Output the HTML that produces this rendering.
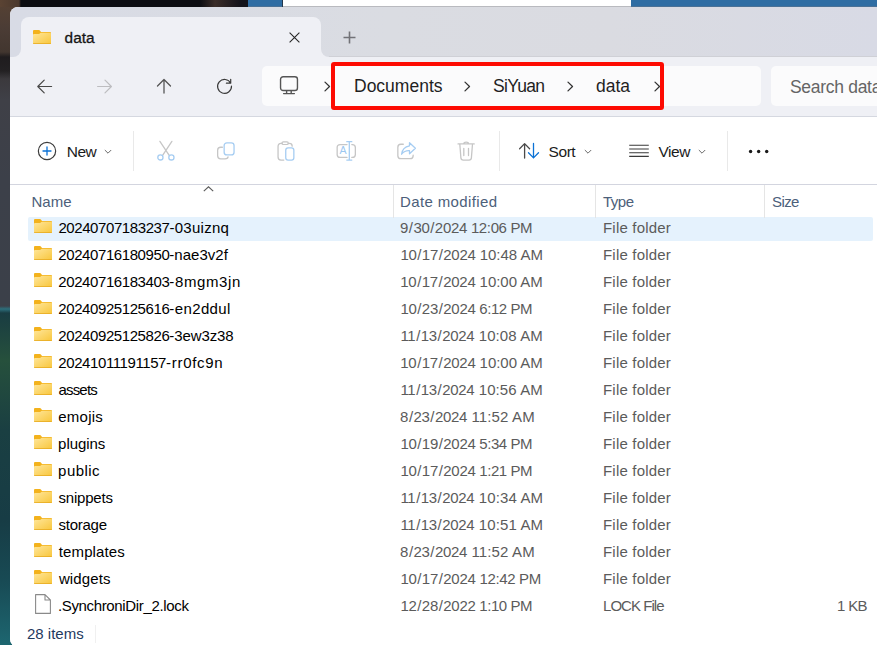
<!DOCTYPE html>
<html lang="en">
<head>
<meta charset="utf-8">
<title>data - File Explorer</title>
<style>
*{box-sizing:border-box;margin:0;padding:0}
html,body{width:877px;height:645px;overflow:hidden}
body{position:relative;font-family:"Liberation Sans",sans-serif;font-size:15px;color:#1a1a1a;
 background:linear-gradient(180deg,#574233 0px,#4b3c35 28px,#42362f 52px,#1f1c1e 57px,#232123 71px,#3b393d 79px,#3f4047 100px,#3c4049 180px,#3b4049 306px,#2d6f7c 309px,#193c42 313px,#26503c 360px,#1a3f42 430px,#173c45 520px,#184a54 580px,#1d6670 645px);}
.abs{position:absolute}
/* desktop top strip */
#top-dark{left:0;top:0;width:248px;height:7px;background:linear-gradient(90deg,#5a4333 0,#4a382d 19px,#0c0d12 21px,#0c0d12 200px,#3a2c28 215px,#14131a 240px)}
#top-blue1{left:248px;top:0;width:35px;height:7px;background:linear-gradient(180deg,#2f6da3 0,#2f6da3 6px,#4a7196 6px)}
#top-white{left:283px;top:0;width:348px;height:6px;background:#fff}
#top-blue2{left:631px;top:0;width:246px;height:7px;background:linear-gradient(180deg,#2f6da3 0,#2f6da3 6px,#4a7196 6px)}
/* window */
#win{left:10px;top:7px;width:900px;height:640px;background:#fff;border-radius:8px 0 0 8px;overflow:hidden}
#titlebar{left:0;top:0;width:900px;height:50px;background:linear-gradient(90deg,#d8dbe5 0,#dadce2 380px,#dadbe1 600px,#d8dae5 867px)}
#tab{left:11px;top:10px;width:300px;height:40px;background:#eff0f5;border-radius:8px 8px 0 0}
.tabfoot{width:8px;height:8px;top:42px;background:#eff0f5}
.tabfoot i{display:block;width:8px;height:8px;background:#d8dbe5}
#navbar{left:0;top:50px;width:900px;height:60px;background:#eff0f5;border-bottom:1px solid #d5d8e0}
#addr{left:252px;top:9px;width:499px;height:40px;background:#fbfbfc;border-radius:5px}
#search{left:761px;top:9px;width:200px;height:40px;background:#fbfbfc;border-radius:5px}
.crumb{top:0;height:42px;line-height:41px;font-size:17.5px;color:#1f1f1f;white-space:nowrap}
#redbox{left:331px;top:62px;width:333px;height:48px;border:4px solid #fd0b02;border-radius:3px}
#toolbar{left:0;top:110px;width:900px;height:68px;background:#fff;border-bottom:1px solid #d3d5df}
.tlabel{top:0;height:69px;line-height:69px;font-size:15.5px;letter-spacing:-0.45px;color:#1b1b1b;white-space:nowrap}
.tsep{top:14px;width:1px;height:40px;background:#e9e9e9}
#list{left:0;top:178px;width:900px;height:460px;background:#fff}
.hdr{top:5px;height:24px;line-height:24px;color:#4c607a;font-size:15px;white-space:nowrap}
.csep{top:0;width:1px;height:33px;background:#e5e5e5}
.row{left:0;width:900px;height:27px}
.row>span{position:absolute;top:0;height:24px;line-height:22px;white-space:nowrap}
.row .n{left:48px;color:#000}
.row .g{letter-spacing:-0.41px}
.row .d{left:390px;color:#5b5b5b}
.row .dp{letter-spacing:-0.28px}
.row .dp i{font-style:normal;margin:0 0.72px}
.row .t{left:593px;color:#5b5b5b;letter-spacing:0.2px}
.row .s{right:43px;color:#5b5b5b}
.row svg{position:absolute;left:24px;top:2px}
#hl{left:18px;top:32px;width:845px;height:24px;background:#e5f2fd;border-radius:2px}
#status{left:17px;top:615px;font-size:15px;color:#1f3a5f;line-height:24px}
</style>
</head>
<body>
<div class="abs" id="top-dark"></div>
<div class="abs" id="top-blue1"></div>
<div class="abs" id="top-white"></div>
<div class="abs" id="top-blue2"></div>

<div class="abs" style="left:283px;top:6px;width:348px;height:1px;background:#b9babf"></div>
<div class="abs" style="left:282px;top:0;width:1px;height:7px;background:#24384c"></div>
<div class="abs" id="win">
  <div class="abs" id="titlebar">
    <div class="abs" style="left:318px;top:49px;width:600px;height:1px;background:#cfd0d6"></div>
    <div class="abs" id="tab"></div>
    <div class="abs tabfoot" style="left:3px"><i style="border-radius:0 0 8px 0"></i></div>
    <div class="abs tabfoot" style="left:311px"><i style="border-radius:0 0 0 8px;background:#dadce3"></i></div>
    <svg class="abs" style="left:23px;top:23px" width="18" height="14" viewBox="0 0 18 14"><defs><linearGradient id="fg" x1="0" y1="0" x2="1" y2="1"><stop offset="0" stop-color="#ffe69a"/><stop offset="1" stop-color="#f8c63c"/></linearGradient></defs><path d="M0 1 Q0 0 1 0 H5.9 Q6.5 0 6.9 0.5 L8 1.9 H17 Q18 1.9 18 2.9 V13 Q18 14 17 14 H1 Q0 14 0 13 Z" fill="#f3b21c"/><path d="M0 4.9 Q0 3.95 0.95 3.95 H5.8 Q6.4 3.95 6.9 3.5 L7.3 3.1 Q7.7 2.8 8.3 2.8 H17.1 Q18 2.8 18 3.7 V13 Q18 14 17 14 H1 Q0 14 0 13 Z" fill="url(#fg)"/><path d="M0 12.7 V13 Q0 14 1 14 H17 Q18 14 18 13 V12.7 Q18 13.2 17 13.2 H1 Q0 13.2 0 12.7 Z" fill="#e6a91f"/></svg>
    <div class="abs" style="left:54.6px;top:19.4px;font-size:15.4px;line-height:24px;color:#161616;-webkit-text-stroke:0.3px #161616">data</div>
    <svg class="abs" style="left:277.75px;top:23.5px" width="13" height="13" viewBox="0 0 13 13"><path d="M1.6 1.6 L11.4 11.4 M11.4 1.6 L1.6 11.4" stroke="#262626" stroke-width="1.1" fill="none"/></svg>
    <svg class="abs" style="left:333.45px;top:24.35px" width="13" height="13" viewBox="0 0 13 13"><path d="M6.5 0.5 V12.5 M0.5 6.5 H12.5" stroke="#727277" stroke-width="1.6" fill="none"/></svg>
  </div>

  <div class="abs" id="navbar">
    <svg class="abs" style="left:26px;top:21.5px" width="17" height="15" viewBox="0 0 17 15"><path d="M15.6 7.5 H1.8 M8.2 1.1 L1.8 7.5 L8.2 13.9" stroke="#484848" stroke-width="1.2" fill="none" stroke-linecap="round" stroke-linejoin="round"/></svg>
    <svg class="abs" style="left:86px;top:21.5px" width="17" height="15" viewBox="0 0 17 15"><path d="M1.6 7.5 H15.4 M9 1.1 L15.4 7.5 L9 13.9" stroke="#bdbdc0" stroke-width="1.2" fill="none" stroke-linecap="round" stroke-linejoin="round"/></svg>
    <svg class="abs" style="left:146px;top:21px" width="16" height="16" viewBox="0 0 16 16"><path d="M8 15.1 V1.5 M1.5 8 L8 1.5 L14.5 8" stroke="#555" stroke-width="1.3" fill="none" stroke-linecap="round" stroke-linejoin="round"/></svg>
    <svg class="abs" style="left:206px;top:21px" width="18" height="18" viewBox="0 0 18 18"><path d="M15.48 8.1 A6.95 6.95 0 1 1 14.69 5.16 M14.7 1.3 V5.16 H10.4" stroke="#3a3a3a" stroke-width="1.2" fill="none" stroke-linecap="round" stroke-linejoin="round"/></svg>
    <div class="abs" id="addr">
      <svg class="abs" style="left:17px;top:10px" width="20" height="20" viewBox="0 0 20 20"><rect x="1.55" y="0.75" width="16.9" height="13.75" rx="2.6" fill="none" stroke="#555" stroke-width="1.4"/><path d="M7.6 14.6 V17.4 M12.2 14.6 V17.4 M4.6 17.6 H15.4" stroke="#555" stroke-width="1.4" fill="none" stroke-linecap="round"/></svg>
      <svg class="abs chev" style="left:61.9px;top:15px" width="7" height="11" viewBox="0 0 7 11"><path d="M1 1.1 L5.5 5.5 L1 9.9" stroke="#333" stroke-width="1.3" fill="none" stroke-linecap="round" stroke-linejoin="round"/></svg>
      <div class="abs crumb" style="left:92px">Documents</div>
      <svg class="abs chev" style="left:202.2px;top:15px" width="7" height="11" viewBox="0 0 7 11"><path d="M1 1.1 L5.5 5.5 L1 9.9" stroke="#333" stroke-width="1.3" fill="none" stroke-linecap="round" stroke-linejoin="round"/></svg>
      <div class="abs crumb" style="left:231px;letter-spacing:-0.7px">SiYuan</div>
      <svg class="abs chev" style="left:305.2px;top:15px" width="7" height="11" viewBox="0 0 7 11"><path d="M1 1.1 L5.5 5.5 L1 9.9" stroke="#333" stroke-width="1.3" fill="none" stroke-linecap="round" stroke-linejoin="round"/></svg>
      <div class="abs crumb" style="left:334px">data</div>
      <svg class="abs chev" style="left:392.1px;top:15px" width="7" height="11" viewBox="0 0 7 11"><path d="M1 1.1 L5.5 5.5 L1 9.9" stroke="#333" stroke-width="1.3" fill="none" stroke-linecap="round" stroke-linejoin="round"/></svg>
    </div>
    <div class="abs" id="search"><div class="abs crumb" style="left:19px;top:1px;color:#656565;letter-spacing:-0.3px">Search data</div></div>
  </div>

  <div class="abs" id="toolbar">
    <!-- new -->
    <svg class="abs" style="left:26.5px;top:23.65px" width="20" height="20" viewBox="0 0 20 20"><circle cx="10" cy="10" r="8.65" fill="none" stroke="#3c3c3c" stroke-width="1.2"/><path d="M10 6 V14 M6 10 H14" stroke="#0b72d6" stroke-width="1.3" fill="none" stroke-linecap="round"/></svg>
    <div class="abs tlabel" style="left:56.7px">New</div>
    <svg class="abs" style="left:94.1px;top:31.7px" width="8" height="6" viewBox="0 0 8 6"><path d="M1.1 1.3 L4 4.2 L6.9 1.3" stroke="#6a6a6a" stroke-width="1" fill="none" stroke-linecap="round" stroke-linejoin="round"/></svg>
    <div class="abs tsep" style="left:123px"></div>
    <!-- cut -->
    <svg class="abs" style="left:144px;top:22px" width="24" height="24" viewBox="0 0 24 24"><path d="M5.9 2.4 L15.2 16.4 M17.9 2.4 L8.6 16.4" stroke="#c6c6c6" stroke-width="1.3" fill="none" stroke-linecap="round"/><circle cx="6.4" cy="18.4" r="2.6" fill="none" stroke="#a6cdf2" stroke-width="1.3"/><circle cx="17.4" cy="18.4" r="2.6" fill="none" stroke="#a6cdf2" stroke-width="1.3"/></svg>
    <!-- copy -->
    <svg class="abs" style="left:204px;top:22px" width="24" height="24" viewBox="0 0 24 24"><path d="M8.4 8.25 H6.65 Q3.65 8.25 3.65 11.25 V16.85 Q3.65 19.85 6.65 19.85 H11.05 Q14.05 19.85 14.05 17.8" stroke="#c6c6c6" stroke-width="1.3" fill="none" stroke-linecap="round"/><rect x="10.15" y="3.85" width="9.9" height="12" rx="2.7" fill="none" stroke="#a6cdf2" stroke-width="1.3"/></svg>
    <!-- paste -->
    <svg class="abs" style="left:264px;top:22px" width="24" height="24" viewBox="0 0 24 24"><path d="M8 4.45 H7 Q4.05 4.45 4.05 7.4 V18.1 Q4.05 21.05 7 21.05 H9.8 M14.3 4.45 H15.3 Q18.2 4.45 18.2 7.2" stroke="#c6c6c6" stroke-width="1.3" fill="none" stroke-linecap="round"/><rect x="8" y="2.9" width="6.3" height="2.6" rx="1.3" fill="none" stroke="#c6c6c6" stroke-width="1.2"/><rect x="11.75" y="8.95" width="8.1" height="12.1" rx="2.3" fill="none" stroke="#a6cdf2" stroke-width="1.3"/></svg>
    <!-- rename -->
    <svg class="abs" style="left:324px;top:22px" width="24" height="24" viewBox="0 0 24 24"><path d="M13 5.55 H6.15 Q3.15 5.55 3.15 8.55 V15.45 Q3.15 18.45 6.15 18.45 H13 M17.8 5.55 H18.35 Q21.35 5.55 21.35 8.55 V15.45 Q21.35 18.45 18.35 18.45 H17.8" stroke="#c6c6c6" stroke-width="1.3" fill="none" stroke-linecap="round"/><path d="M15.3 2.65 V21.05 M12.8 2.65 H17.8 M12.8 21.05 H17.8" stroke="#a6cdf2" stroke-width="1.3" fill="none" stroke-linecap="round"/><text x="5.5" y="15.2" font-family="Liberation Sans, sans-serif" font-size="10.6" fill="#9cc7f0">A</text></svg>
    <!-- share -->
    <svg class="abs" style="left:384px;top:22px" width="24" height="24" viewBox="0 0 24 24"><path d="M9.3 5.25 H6.85 Q3.85 5.25 3.85 8.25 V16.65 Q3.85 19.65 6.85 19.65 H16.15 Q19.15 19.65 19.15 16.65 V16.2" stroke="#c6c6c6" stroke-width="1.3" fill="none" stroke-linecap="round"/><path d="M15.5 3.7 L21.4 9.2 L15.5 14.7 V11.7 Q10.8 11.3 7.6 15.2 Q8.4 8 15.5 6.8 Z" stroke="#a6cdf2" stroke-width="1.3" fill="none" stroke-linejoin="round"/></svg>
    <!-- delete -->
    <svg class="abs" style="left:444px;top:22px" width="24" height="24" viewBox="0 0 24 24"><path d="M4.05 4.9 H20.25 M9.8 4.7 Q9.8 3.1 12.15 3.1 Q14.5 3.1 14.5 4.7 M5.8 5 L6.9 18.9 Q7.1 21.05 9.3 21.05 H15 Q17.2 21.05 17.4 18.9 L18.5 5 M9.8 9.3 V16.5 M14.5 9.3 V16.5" stroke="#c6c6c6" stroke-width="1.3" fill="none" stroke-linecap="round"/></svg>
    <div class="abs tsep" style="left:489.3px"></div>
    <!-- sort -->
    <svg class="abs" style="left:506px;top:22px" width="26" height="24" viewBox="0 0 26 24"><path d="M8.6 19 V4.6 M3.6 9.7 L8.6 4.6 L13.6 9.7" stroke="#4a4a4a" stroke-width="1.3" fill="none" stroke-linecap="round" stroke-linejoin="round"/><path d="M17.5 4.4 V18.9 M12.5 13.8 L17.5 18.9 L22.5 13.8" stroke="#0b72d6" stroke-width="1.3" fill="none" stroke-linecap="round" stroke-linejoin="round"/></svg>
    <div class="abs tlabel" style="left:538.6px">Sort</div>
    <svg class="abs" style="left:574.4px;top:31.8px" width="8" height="6" viewBox="0 0 8 6"><path d="M1.1 1.3 L4 4.2 L6.9 1.3" stroke="#6a6a6a" stroke-width="1" fill="none" stroke-linecap="round" stroke-linejoin="round"/></svg>
    <!-- view -->
    <svg class="abs" style="left:619px;top:27px" width="21" height="14" viewBox="0 0 21 14"><path d="M0.2 1.3 H19.8 M0.2 5 H19.8 M0.2 8.7 H19.8 M0.2 12.4 H19.8" stroke="#3a3a3a" stroke-width="1.1" fill="none"/></svg>
    <div class="abs tlabel" style="left:648.4px">View</div>
    <svg class="abs" style="left:688.2px;top:31.8px" width="8" height="6" viewBox="0 0 8 6"><path d="M1.1 1.3 L4 4.2 L6.9 1.3" stroke="#6a6a6a" stroke-width="1" fill="none" stroke-linecap="round" stroke-linejoin="round"/></svg>
    <div class="abs tsep" style="left:717px"></div>
    <svg class="abs" style="left:738px;top:32px" width="22" height="5" viewBox="0 0 22 5"><circle cx="2.6" cy="2.5" r="1.7" fill="#1a1a1a"/><circle cx="10.65" cy="2.5" r="1.7" fill="#1a1a1a"/><circle cx="18.7" cy="2.5" r="1.7" fill="#1a1a1a"/></svg>
  </div>

  <div class="abs" id="list">
    <div class="abs" id="hl"></div>
    <svg class="abs" style="left:193px;top:1px" width="11" height="6" viewBox="0 0 11 6"><path d="M0.8 5.2 L5.5 0.8 L10.2 5.2" stroke="#5c5c5c" stroke-width="1.15" fill="none"/></svg>
    <div class="abs hdr" style="left:21.5px">Name</div>
    <div class="abs csep" style="left:382.5px"></div>
    <div class="abs hdr" style="left:390px;letter-spacing:0.37px">Date modified</div>
    <div class="abs csep" style="left:585px"></div>
    <div class="abs hdr" style="left:593px;letter-spacing:-0.5px">Type</div>
    <div class="abs csep" style="left:754px"></div>
    <div class="abs hdr" style="left:762px;letter-spacing:-0.6px">Size</div>
    <!--ROWS-->
    <div class="abs row" style="top:32px"><svg width="18" height="14" viewBox="0 0 18 14"><path d="M0 1 Q0 0 1 0 H5.9 Q6.5 0 6.9 0.5 L8 1.9 H17 Q18 1.9 18 2.9 V13 Q18 14 17 14 H1 Q0 14 0 13 Z" fill="#f3b21c"/><path d="M0 4.9 Q0 3.95 0.95 3.95 H5.8 Q6.4 3.95 6.9 3.5 L7.3 3.1 Q7.7 2.8 8.3 2.8 H17.1 Q18 2.8 18 3.7 V13 Q18 14 17 14 H1 Q0 14 0 13 Z" fill="url(#fg)"/><path d="M0 12.7 V13 Q0 14 1 14 H17 Q18 14 18 13 V12.7 Q18 13.2 17 13.2 H1 Q0 13.2 0 12.7 Z" fill="#e6a91f"/></svg><span class="n" style="left:48.4px;letter-spacing:0.27px"><span class="g">20240707183237</span>-03uiznq</span><span class="d" style="left:390.0px;letter-spacing:-0.37px"><span class="dp">9<i>/</i>30<i>/</i>2024</span> 12:06 PM</span><span class="t">File folder</span></div>
    <div class="abs row" style="top:59px"><svg width="18" height="14" viewBox="0 0 18 14"><path d="M0 1 Q0 0 1 0 H5.9 Q6.5 0 6.9 0.5 L8 1.9 H17 Q18 1.9 18 2.9 V13 Q18 14 17 14 H1 Q0 14 0 13 Z" fill="#f3b21c"/><path d="M0 4.9 Q0 3.95 0.95 3.95 H5.8 Q6.4 3.95 6.9 3.5 L7.3 3.1 Q7.7 2.8 8.3 2.8 H17.1 Q18 2.8 18 3.7 V13 Q18 14 17 14 H1 Q0 14 0 13 Z" fill="url(#fg)"/><path d="M0 12.7 V13 Q0 14 1 14 H17 Q18 14 18 13 V12.7 Q18 13.2 17 13.2 H1 Q0 13.2 0 12.7 Z" fill="#e6a91f"/></svg><span class="n" style="left:48.3px;letter-spacing:0.01px"><span class="g">20240716180950</span>-nae3v2f</span><span class="d" style="left:390.4px;letter-spacing:-0.01px"><span class="dp">10<i>/</i>17<i>/</i>2024</span> 10:48 AM</span><span class="t">File folder</span></div>
    <div class="abs row" style="top:86px"><svg width="18" height="14" viewBox="0 0 18 14"><path d="M0 1 Q0 0 1 0 H5.9 Q6.5 0 6.9 0.5 L8 1.9 H17 Q18 1.9 18 2.9 V13 Q18 14 17 14 H1 Q0 14 0 13 Z" fill="#f3b21c"/><path d="M0 4.9 Q0 3.95 0.95 3.95 H5.8 Q6.4 3.95 6.9 3.5 L7.3 3.1 Q7.7 2.8 8.3 2.8 H17.1 Q18 2.8 18 3.7 V13 Q18 14 17 14 H1 Q0 14 0 13 Z" fill="url(#fg)"/><path d="M0 12.7 V13 Q0 14 1 14 H17 Q18 14 18 13 V12.7 Q18 13.2 17 13.2 H1 Q0 13.2 0 12.7 Z" fill="#e6a91f"/></svg><span class="n" style="left:48.3px;letter-spacing:0.6px"><span class="g">20240716183403</span>-8mgm3jn</span><span class="d" style="left:390.3px;letter-spacing:-0.03px"><span class="dp">10<i>/</i>17<i>/</i>2024</span> 10:00 AM</span><span class="t">File folder</span></div>
    <div class="abs row" style="top:113px"><svg width="18" height="14" viewBox="0 0 18 14"><path d="M0 1 Q0 0 1 0 H5.9 Q6.5 0 6.9 0.5 L8 1.9 H17 Q18 1.9 18 2.9 V13 Q18 14 17 14 H1 Q0 14 0 13 Z" fill="#f3b21c"/><path d="M0 4.9 Q0 3.95 0.95 3.95 H5.8 Q6.4 3.95 6.9 3.5 L7.3 3.1 Q7.7 2.8 8.3 2.8 H17.1 Q18 2.8 18 3.7 V13 Q18 14 17 14 H1 Q0 14 0 13 Z" fill="url(#fg)"/><path d="M0 12.7 V13 Q0 14 1 14 H17 Q18 14 18 13 V12.7 Q18 13.2 17 13.2 H1 Q0 13.2 0 12.7 Z" fill="#e6a91f"/></svg><span class="n" style="left:48.3px;letter-spacing:0.38px"><span class="g">20240925125616</span>-en2ddul</span><span class="d" style="left:390.4px;letter-spacing:-0.44px"><span class="dp">10<i>/</i>23<i>/</i>2024</span> 6:12 PM</span><span class="t">File folder</span></div>
    <div class="abs row" style="top:140px"><svg width="18" height="14" viewBox="0 0 18 14"><path d="M0 1 Q0 0 1 0 H5.9 Q6.5 0 6.9 0.5 L8 1.9 H17 Q18 1.9 18 2.9 V13 Q18 14 17 14 H1 Q0 14 0 13 Z" fill="#f3b21c"/><path d="M0 4.9 Q0 3.95 0.95 3.95 H5.8 Q6.4 3.95 6.9 3.5 L7.3 3.1 Q7.7 2.8 8.3 2.8 H17.1 Q18 2.8 18 3.7 V13 Q18 14 17 14 H1 Q0 14 0 13 Z" fill="url(#fg)"/><path d="M0 12.7 V13 Q0 14 1 14 H17 Q18 14 18 13 V12.7 Q18 13.2 17 13.2 H1 Q0 13.2 0 12.7 Z" fill="#e6a91f"/></svg><span class="n" style="left:48.3px;letter-spacing:-0.11px"><span class="g">20240925125826</span>-3ew3z38</span><span class="d" style="left:390.4px;letter-spacing:0.1px"><span class="dp">11<i>/</i>13<i>/</i>2024</span> 10:08 AM</span><span class="t">File folder</span></div>
    <div class="abs row" style="top:167px"><svg width="18" height="14" viewBox="0 0 18 14"><path d="M0 1 Q0 0 1 0 H5.9 Q6.5 0 6.9 0.5 L8 1.9 H17 Q18 1.9 18 2.9 V13 Q18 14 17 14 H1 Q0 14 0 13 Z" fill="#f3b21c"/><path d="M0 4.9 Q0 3.95 0.95 3.95 H5.8 Q6.4 3.95 6.9 3.5 L7.3 3.1 Q7.7 2.8 8.3 2.8 H17.1 Q18 2.8 18 3.7 V13 Q18 14 17 14 H1 Q0 14 0 13 Z" fill="url(#fg)"/><path d="M0 12.7 V13 Q0 14 1 14 H17 Q18 14 18 13 V12.7 Q18 13.2 17 13.2 H1 Q0 13.2 0 12.7 Z" fill="#e6a91f"/></svg><span class="n" style="left:48.3px;letter-spacing:0.71px"><span class="g">20241011191157</span>-rr0fc9n</span><span class="d" style="left:390.3px;letter-spacing:-0.03px"><span class="dp">10<i>/</i>17<i>/</i>2024</span> 10:00 AM</span><span class="t">File folder</span></div>
    <div class="abs row" style="top:194px"><svg width="18" height="14" viewBox="0 0 18 14"><path d="M0 1 Q0 0 1 0 H5.9 Q6.5 0 6.9 0.5 L8 1.9 H17 Q18 1.9 18 2.9 V13 Q18 14 17 14 H1 Q0 14 0 13 Z" fill="#f3b21c"/><path d="M0 4.9 Q0 3.95 0.95 3.95 H5.8 Q6.4 3.95 6.9 3.5 L7.3 3.1 Q7.7 2.8 8.3 2.8 H17.1 Q18 2.8 18 3.7 V13 Q18 14 17 14 H1 Q0 14 0 13 Z" fill="url(#fg)"/><path d="M0 12.7 V13 Q0 14 1 14 H17 Q18 14 18 13 V12.7 Q18 13.2 17 13.2 H1 Q0 13.2 0 12.7 Z" fill="#e6a91f"/></svg><span class="n" style="left:48.4px;letter-spacing:-0.79px">assets</span><span class="d" style="left:390.4px;letter-spacing:0.1px"><span class="dp">11<i>/</i>13<i>/</i>2024</span> 10:56 AM</span><span class="t">File folder</span></div>
    <div class="abs row" style="top:221px"><svg width="18" height="14" viewBox="0 0 18 14"><path d="M0 1 Q0 0 1 0 H5.9 Q6.5 0 6.9 0.5 L8 1.9 H17 Q18 1.9 18 2.9 V13 Q18 14 17 14 H1 Q0 14 0 13 Z" fill="#f3b21c"/><path d="M0 4.9 Q0 3.95 0.95 3.95 H5.8 Q6.4 3.95 6.9 3.5 L7.3 3.1 Q7.7 2.8 8.3 2.8 H17.1 Q18 2.8 18 3.7 V13 Q18 14 17 14 H1 Q0 14 0 13 Z" fill="url(#fg)"/><path d="M0 12.7 V13 Q0 14 1 14 H17 Q18 14 18 13 V12.7 Q18 13.2 17 13.2 H1 Q0 13.2 0 12.7 Z" fill="#e6a91f"/></svg><span class="n" style="left:48.3px;letter-spacing:0.23px">emojis</span><span class="d" style="left:390.1px;letter-spacing:0.13px"><span class="dp">8<i>/</i>23<i>/</i>2024</span> 11:52 AM</span><span class="t">File folder</span></div>
    <div class="abs row" style="top:248px"><svg width="18" height="14" viewBox="0 0 18 14"><path d="M0 1 Q0 0 1 0 H5.9 Q6.5 0 6.9 0.5 L8 1.9 H17 Q18 1.9 18 2.9 V13 Q18 14 17 14 H1 Q0 14 0 13 Z" fill="#f3b21c"/><path d="M0 4.9 Q0 3.95 0.95 3.95 H5.8 Q6.4 3.95 6.9 3.5 L7.3 3.1 Q7.7 2.8 8.3 2.8 H17.1 Q18 2.8 18 3.7 V13 Q18 14 17 14 H1 Q0 14 0 13 Z" fill="url(#fg)"/><path d="M0 12.7 V13 Q0 14 1 14 H17 Q18 14 18 13 V12.7 Q18 13.2 17 13.2 H1 Q0 13.2 0 12.7 Z" fill="#e6a91f"/></svg><span class="n" style="left:48.1px;letter-spacing:-0.05px">plugins</span><span class="d" style="left:390.4px;letter-spacing:-0.44px"><span class="dp">10<i>/</i>19<i>/</i>2024</span> 5:34 PM</span><span class="t">File folder</span></div>
    <div class="abs row" style="top:275px"><svg width="18" height="14" viewBox="0 0 18 14"><path d="M0 1 Q0 0 1 0 H5.9 Q6.5 0 6.9 0.5 L8 1.9 H17 Q18 1.9 18 2.9 V13 Q18 14 17 14 H1 Q0 14 0 13 Z" fill="#f3b21c"/><path d="M0 4.9 Q0 3.95 0.95 3.95 H5.8 Q6.4 3.95 6.9 3.5 L7.3 3.1 Q7.7 2.8 8.3 2.8 H17.1 Q18 2.8 18 3.7 V13 Q18 14 17 14 H1 Q0 14 0 13 Z" fill="url(#fg)"/><path d="M0 12.7 V13 Q0 14 1 14 H17 Q18 14 18 13 V12.7 Q18 13.2 17 13.2 H1 Q0 13.2 0 12.7 Z" fill="#e6a91f"/></svg><span class="n" style="left:48.1px;letter-spacing:0.45px">public</span><span class="d" style="left:390.4px;letter-spacing:-0.44px"><span class="dp">10<i>/</i>17<i>/</i>2024</span> 1:21 PM</span><span class="t">File folder</span></div>
    <div class="abs row" style="top:302px"><svg width="18" height="14" viewBox="0 0 18 14"><path d="M0 1 Q0 0 1 0 H5.9 Q6.5 0 6.9 0.5 L8 1.9 H17 Q18 1.9 18 2.9 V13 Q18 14 17 14 H1 Q0 14 0 13 Z" fill="#f3b21c"/><path d="M0 4.9 Q0 3.95 0.95 3.95 H5.8 Q6.4 3.95 6.9 3.5 L7.3 3.1 Q7.7 2.8 8.3 2.8 H17.1 Q18 2.8 18 3.7 V13 Q18 14 17 14 H1 Q0 14 0 13 Z" fill="url(#fg)"/><path d="M0 12.7 V13 Q0 14 1 14 H17 Q18 14 18 13 V12.7 Q18 13.2 17 13.2 H1 Q0 13.2 0 12.7 Z" fill="#e6a91f"/></svg><span class="n" style="left:48.5px;letter-spacing:-0.21px">snippets</span><span class="d" style="left:390.4px;letter-spacing:0.13px"><span class="dp">11<i>/</i>13<i>/</i>2024</span> 10:34 AM</span><span class="t">File folder</span></div>
    <div class="abs row" style="top:329px"><svg width="18" height="14" viewBox="0 0 18 14"><path d="M0 1 Q0 0 1 0 H5.9 Q6.5 0 6.9 0.5 L8 1.9 H17 Q18 1.9 18 2.9 V13 Q18 14 17 14 H1 Q0 14 0 13 Z" fill="#f3b21c"/><path d="M0 4.9 Q0 3.95 0.95 3.95 H5.8 Q6.4 3.95 6.9 3.5 L7.3 3.1 Q7.7 2.8 8.3 2.8 H17.1 Q18 2.8 18 3.7 V13 Q18 14 17 14 H1 Q0 14 0 13 Z" fill="url(#fg)"/><path d="M0 12.7 V13 Q0 14 1 14 H17 Q18 14 18 13 V12.7 Q18 13.2 17 13.2 H1 Q0 13.2 0 12.7 Z" fill="#e6a91f"/></svg><span class="n" style="left:48.5px;letter-spacing:-0.25px">storage</span><span class="d" style="left:390.4px;letter-spacing:0.13px"><span class="dp">11<i>/</i>13<i>/</i>2024</span> 10:51 AM</span><span class="t">File folder</span></div>
    <div class="abs row" style="top:356px"><svg width="18" height="14" viewBox="0 0 18 14"><path d="M0 1 Q0 0 1 0 H5.9 Q6.5 0 6.9 0.5 L8 1.9 H17 Q18 1.9 18 2.9 V13 Q18 14 17 14 H1 Q0 14 0 13 Z" fill="#f3b21c"/><path d="M0 4.9 Q0 3.95 0.95 3.95 H5.8 Q6.4 3.95 6.9 3.5 L7.3 3.1 Q7.7 2.8 8.3 2.8 H17.1 Q18 2.8 18 3.7 V13 Q18 14 17 14 H1 Q0 14 0 13 Z" fill="url(#fg)"/><path d="M0 12.7 V13 Q0 14 1 14 H17 Q18 14 18 13 V12.7 Q18 13.2 17 13.2 H1 Q0 13.2 0 12.7 Z" fill="#e6a91f"/></svg><span class="n" style="left:48.8px;letter-spacing:0.11px">templates</span><span class="d" style="left:390.1px;letter-spacing:0.13px"><span class="dp">8<i>/</i>23<i>/</i>2024</span> 11:52 AM</span><span class="t">File folder</span></div>
    <div class="abs row" style="top:383px"><svg width="18" height="14" viewBox="0 0 18 14"><path d="M0 1 Q0 0 1 0 H5.9 Q6.5 0 6.9 0.5 L8 1.9 H17 Q18 1.9 18 2.9 V13 Q18 14 17 14 H1 Q0 14 0 13 Z" fill="#f3b21c"/><path d="M0 4.9 Q0 3.95 0.95 3.95 H5.8 Q6.4 3.95 6.9 3.5 L7.3 3.1 Q7.7 2.8 8.3 2.8 H17.1 Q18 2.8 18 3.7 V13 Q18 14 17 14 H1 Q0 14 0 13 Z" fill="url(#fg)"/><path d="M0 12.7 V13 Q0 14 1 14 H17 Q18 14 18 13 V12.7 Q18 13.2 17 13.2 H1 Q0 13.2 0 12.7 Z" fill="#e6a91f"/></svg><span class="n" style="left:48.9px;letter-spacing:0.13px">widgets</span><span class="d" style="left:390.4px;letter-spacing:-0.33px"><span class="dp">10<i>/</i>17<i>/</i>2024</span> 12:42 PM</span><span class="t">File folder</span></div>
    <div class="abs row" style="top:410px"><svg width="16" height="20" viewBox="0 0 16 20" style="left:25px;top:-1px"><path d="M0.6 0.6 H10 L15.4 6 V19.4 H0.6 Z M10 0.6 V6 H15.4" fill="#fff" stroke="#8a8a8a" stroke-width="1.1" stroke-linejoin="round"/></svg><span class="n" style="left:47.9px;letter-spacing:-0.34px">.SynchroniDir_2.lock</span><span class="d" style="left:390.4px;letter-spacing:-0.44px"><span class="dp">12<i>/</i>28<i>/</i>2022</span> 1:10 PM</span><span class="t" style="letter-spacing:-0.95px">LOCK File</span><span class="s" style="letter-spacing:-0.6px">1 KB</span></div>
    <!--/ROWS-->
  </div>
  <div class="abs" id="status">28 items</div>
  <div class="abs" style="left:85px;top:618px;width:1px;height:18px;background:#f0f0f0"></div>
</div>
<div class="abs" id="redbox"></div>
</body>
</html>
